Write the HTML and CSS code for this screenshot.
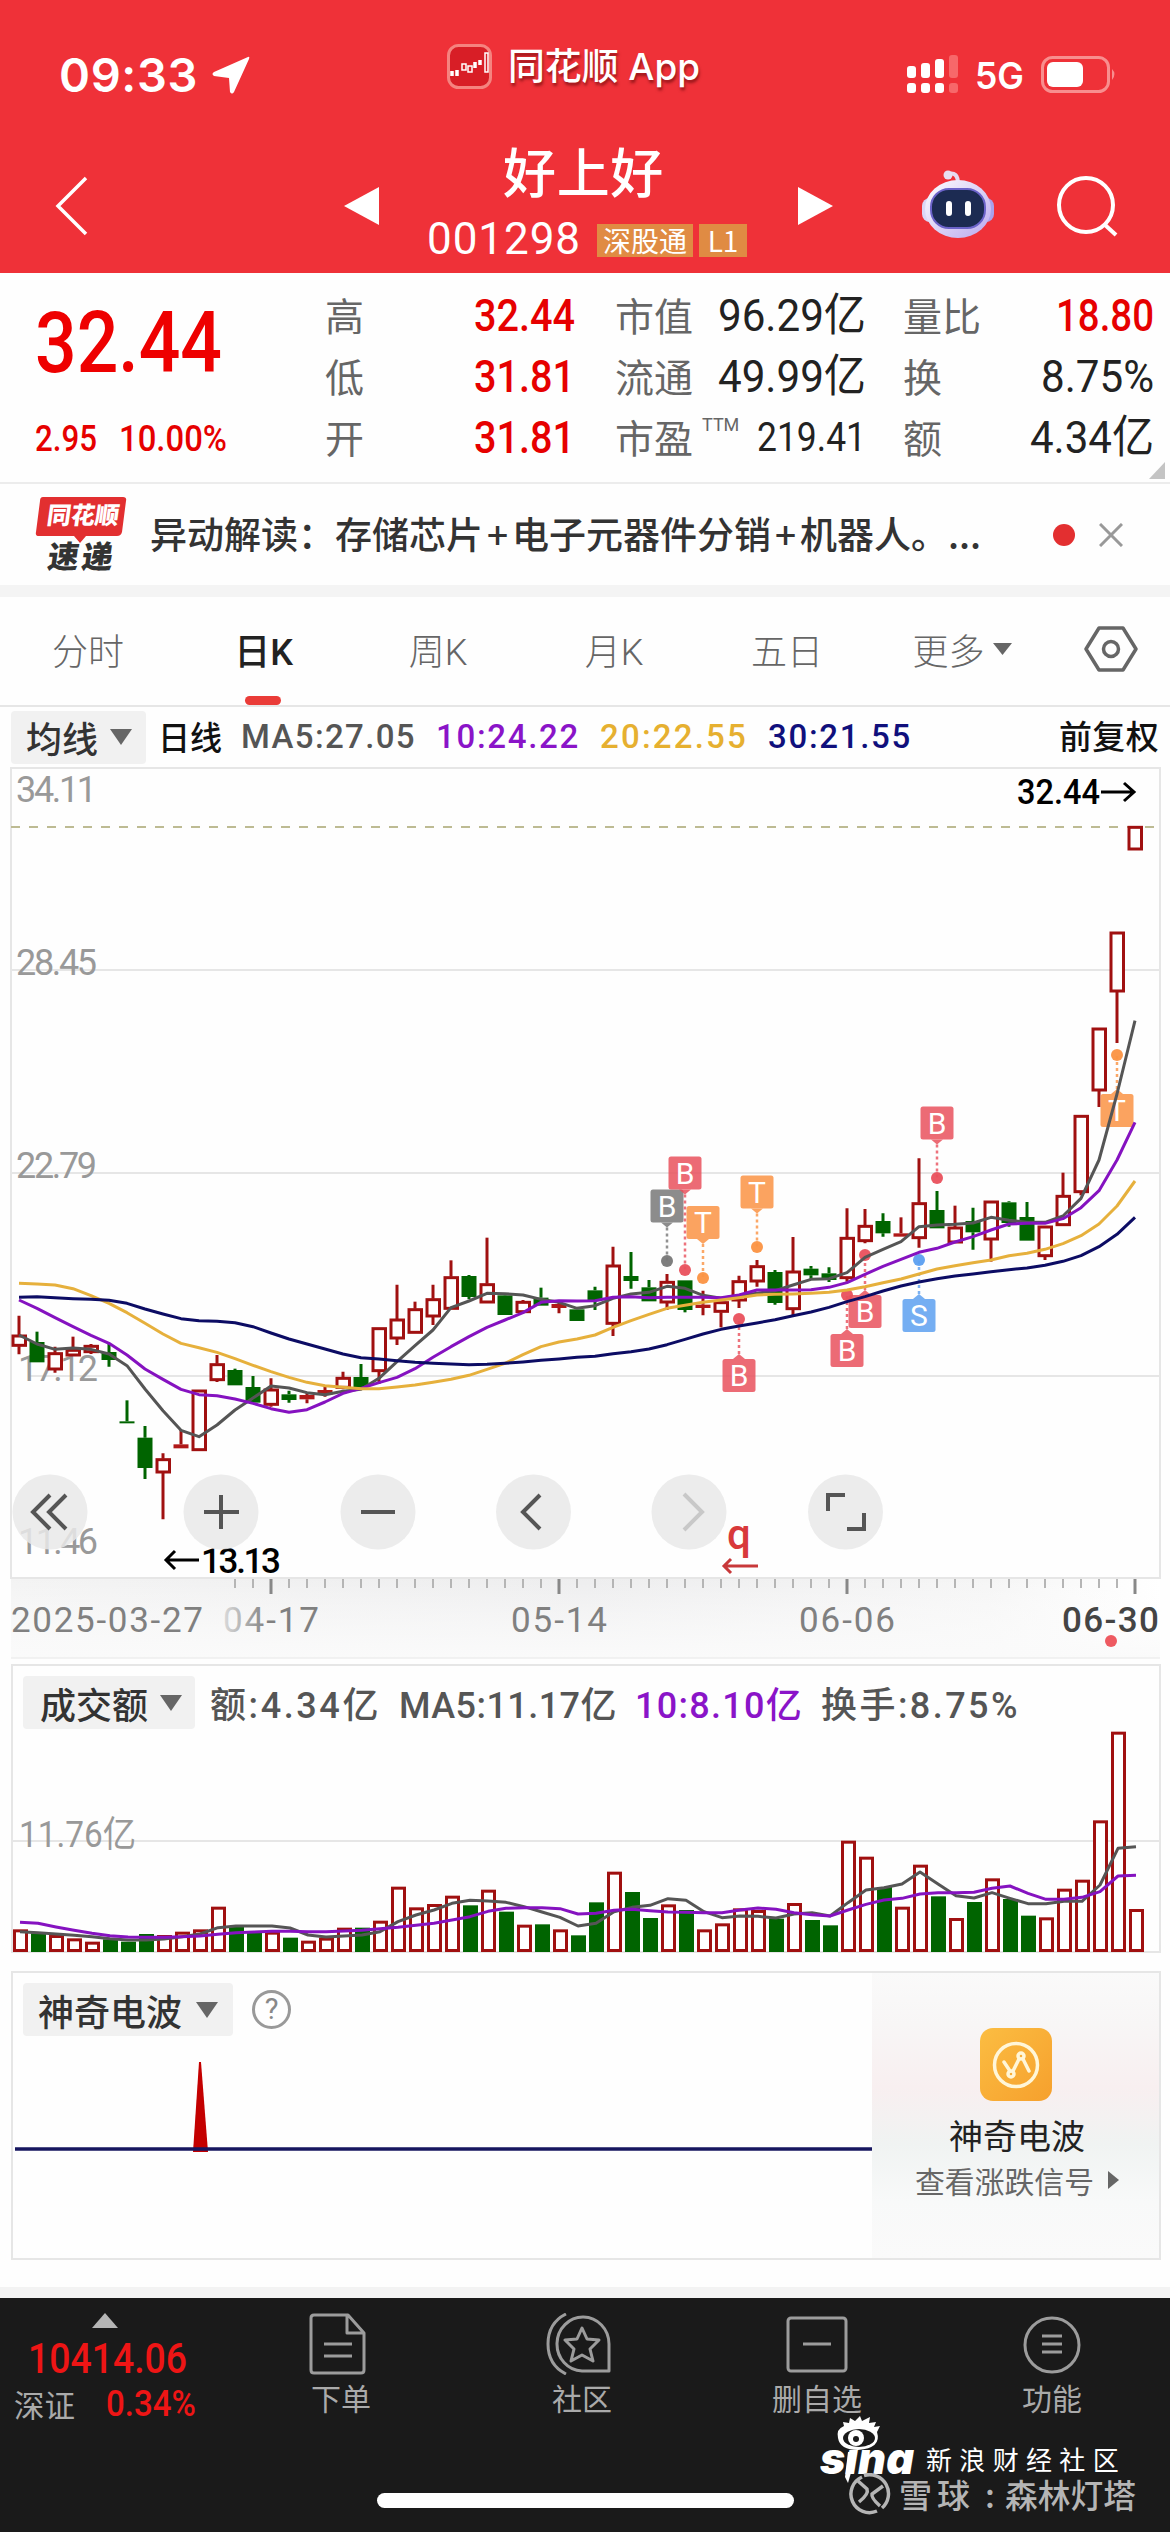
FILE: index.html
```html
<!DOCTYPE html>
<html lang="zh-CN">
<head>
<meta charset="utf-8">
<title>好上好 001298</title>
<link rel="stylesheet" href="styles.css">
</head>
<body>
<header class="top">
  <div class="status">
    <div class="clock"><span class="fit" data-w="139">09:33</span>
      <svg width="40" height="40" viewBox="0 0 40 40"><path d="M37 2 3 17q-3 2 0 4l15 2 1 14q2 3 4 0L38 4q1-3-1-2z" fill="#fff"/></svg>
    </div>
    <div class="island">
      <svg width="46" height="46" viewBox="0 0 46 46"><rect x="1.500" y="1.500" width="42" height="42" rx="10" fill="#d81e26" stroke="#f5837f" stroke-width="3"/><path d="M5 27v5M10 26v6M28 18v6M33 16v5" stroke="#fff" stroke-width="3.500"/><path d="M15 20h4v6h-4zM21 22h4v6h-4zM38 9h3v19h-3z" stroke="#fff" stroke-width="1.500" fill="none"/></svg>
      <span class="fit" data-w="192">同花顺 App</span>
    </div>
    <div class="signal">
      <svg width="54" height="40" viewBox="0 0 54 40"><g fill="#fff"><rect y="11" width="9" height="12" rx="3"/><rect x="14" y="8" width="9" height="15" rx="3"/><rect x="28" y="4" width="9" height="19" rx="3"/><rect y="28" width="9" height="10" rx="3"/><rect x="14" y="28" width="9" height="10" rx="3"/><rect x="28" y="28" width="9" height="10" rx="3"/></g><g fill="#f7686a"><rect x="42" width="9" height="23" rx="3"/><rect x="42" y="28" width="9" height="10" rx="3"/></g></svg>
      <span class="fit net" data-w="49">5G</span>
      <svg width="77" height="38" viewBox="0 0 77 38"><rect x="1.500" y="1.500" width="66" height="34" rx="10" fill="none" stroke="#f88e8e" stroke-width="3"/><rect x="6" y="6" width="36" height="25" rx="6" fill="#fff"/><path d="M71 13q5 5 0 11z" fill="#f88e8e"/></svg>
    </div>
  </div>
  <div class="titlebar">
    <svg class="back" width="34" height="62" viewBox="0 0 34 62"><path d="M31 3 3 31 31 59" fill="none" stroke="#fff" stroke-width="3.500"/></svg>
    <svg class="prev" width="36" height="38" viewBox="0 0 36 38"><path d="M35 0v38L0 19z" fill="#fff"/></svg>
    <div class="name">
      <h1><span class="fit" data-w="161">好上好</span></h1>
      <div class="code"><span class="fit" data-w="154">001298</span><i class="t1">深股通</i><i class="t2">L1</i></div>
    </div>
    <svg class="next" width="36" height="38" viewBox="0 0 36 38"><path d="M0 0v38L35 19z" fill="#fff"/></svg>
    <svg class="bot" width="76" height="70" viewBox="0 0 76 70"><defs><linearGradient id="bg" x1="0" y1="0" x2="1" y2="1"><stop offset="0" stop-color="#fff"/><stop offset="1" stop-color="#b9a8ee"/></linearGradient></defs><path d="M28 5q10-3 10 10" fill="none" stroke="#e6d9f0" stroke-width="4"/><circle cx="28" cy="6" r="4.500" fill="#e8dff2"/><rect x="2" y="29" width="16" height="24" rx="8" fill="#dad6f6"/><rect x="58" y="29" width="16" height="24" rx="8" fill="#a9a2ec"/><ellipse cx="38" cy="40" rx="33" ry="29" fill="url(#bg)"/><rect x="11" y="20" width="54" height="39" rx="18" fill="#1c2b52" stroke="#6b63c9" stroke-width="2"/><path d="M29 35v9M48 35v9" stroke="#fff" stroke-width="6" stroke-linecap="round"/></svg>
    <svg class="find" width="64" height="62" viewBox="0 0 64 62"><circle cx="30" cy="30" r="27" fill="none" stroke="#fff" stroke-width="4"/><path d="M48 49 60 60" stroke="#fff" stroke-width="4"/></svg>
  </div>
</header>

<section class="quote">
  <div class="price">
    <div class="big red"><span class="fit" data-w="187">32.44</span></div>
    <div class="chg red"><span class="fit" data-w="62">2.95</span><span class="fit" data-w="108">10.00%</span></div>
  </div>
  <dl class="c1">
    <dt>高</dt><dd class="red"><span class="fit" data-w="101">32.44</span></dd>
    <dt>低</dt><dd class="red"><span class="fit" data-w="101">31.81</span></dd>
    <dt>开</dt><dd class="red"><span class="fit" data-w="101">31.81</span></dd>
  </dl>
  <dl class="c2">
    <dt>市值</dt><dd><span class="fit" data-w="148">96.29亿</span></dd>
    <dt>流通</dt><dd><span class="fit" data-w="148">49.99亿</span></dd>
    <dt class="pe">市盈<sup>TTM</sup></dt><dd class="sm"><span class="fit" data-w="109">219.41</span></dd>
  </dl>
  <dl class="c3">
    <dt>量比</dt><dd class="red"><span class="fit" data-w="98">18.80</span></dd>
    <dt>换</dt><dd><span class="fit" data-w="113">8.75%</span></dd>
    <dt>额</dt><dd><span class="fit" data-w="124">4.34亿</span></dd>
  </dl>
  <svg class="corner" width="16" height="17" viewBox="0 0 16 17"><path d="M16 0v17H0z" fill="#c4c4c4"/></svg>
</section>

<section class="news">
  <div class="logo">
    <svg width="92" height="52" viewBox="0 0 92 52"><path d="M8 1h80q4 0 3 4l-4 31q-1 4-5 4H51l-6 7-6-7H4q-4 0-3-4L5 5q0-4 3-4z" fill="#e22f30"/></svg>
    <b class="l1">同花顺</b><b class="l2">速递</b>
  </div>
  <p><span class="fit" data-w="831">异动解读：存储芯片<i>+</i>电子元器件分销<i>+</i>机器人。...</span></p>
  <i class="dot"></i>
  <svg width="24" height="24" viewBox="0 0 24 24"><path d="M1 1 23 23M23 1 1 23" stroke="#999" stroke-width="3"/></svg>
</section>

<nav class="tabs">
  <a>分时</a><a class="on">日K</a><a>周K</a><a>月K</a><a>五日</a>
  <a class="more">更多<svg width="19" height="14" viewBox="0 0 19 14"><path d="M0 1h19L9.500 13z" fill="#666"/></svg></a>
  <a><svg width="54" height="48" viewBox="0 0 54 48"><path d="M15 3h24L52 24 39 45H15L2 24z" fill="none" stroke="#666" stroke-width="3.500" stroke-linejoin="round"/><circle cx="27" cy="24" r="7.500" fill="none" stroke="#666" stroke-width="3.500"/></svg></a>
</nav>

<section class="indicators">
  <span class="pill p1">均线<svg width="22" height="16" viewBox="0 0 22 16"><path d="M0 0h22L11 16z" fill="#666"/></svg></span>
  <span class="fit day" data-w="64">日线</span>
  <span class="fit m5" data-w="175">MA5:27.05</span>
  <span class="fit m10" data-w="144">10:24.22</span>
  <span class="fit m20" data-w="148">20:22.55</span>
  <span class="fit m30" data-w="144">30:21.55</span>
  <span class="fit adj" data-w="100">前复权</span>
</section>

<main>
  <svg id="kline" width="1170" height="897" viewBox="0 767 1170 897">
    <defs>
      <linearGradient id="ax"><stop offset="0" stop-color="#f3f3f3"/><stop offset=".5" stop-color="#ededee"/><stop offset=".85" stop-color="#f5f5f5"/><stop offset="1" stop-color="#fff"/></linearGradient>
      <linearGradient id="axv" x2="0" y2="1"><stop offset="0" stop-color="#fff" stop-opacity="0"/><stop offset="1" stop-color="#fafafa"/></linearGradient>
      <linearGradient id="fade" gradientUnits="userSpaceOnUse" x1="222" x2="268" y1="0" y2="0"><stop offset="0" stop-color="#ddd"/><stop offset="1" stop-color="#808080"/></linearGradient>
    </defs>
    <rect x="11" y="1578" width="1149" height="80" fill="url(#ax)"/><rect x="11" y="1578" width="1149" height="80" fill="url(#axv)"/>
    <path d="M11 768H1160V1578H11zM11 970H1160M11 1173H1160M30 1376H1160" fill="none" stroke="#e6e6e6" stroke-width="2"/>
    <path d="M11 1658H1160" stroke="#eee" stroke-width="1.500"/>
    <path d="M11 827H1160" stroke="#bdbb93" stroke-width="2" stroke-dasharray="9 9"/>
    <g class="scale">
      <text x="16" y="802" textLength="81">34.11</text><text x="16" y="975" textLength="81">28.45</text><text x="16" y="1178" textLength="81">22.79</text><text x="18" y="1381" textLength="80">17.12</text><text x="18" y="1554" textLength="80">11.46</text>
    </g>
    <g id="plot"></g>
    <g class="mark">
      <text x="1017" y="804" textLength="83" lengthAdjust="spacingAndGlyphs">32.44</text><text x="201" y="1573" textLength="80">13.13</text>
      <path d="M1101 792H1134M1124 783l10 9-10 9M199 1560H166M175 1551l-9 9 9 9"/>
    </g>
    <g class="ctl">
      <circle cx="50" cy="1512" r="37.500"/><circle cx="221" cy="1512" r="37.500"/><circle cx="378" cy="1512" r="37.500"/><circle cx="533.500" cy="1512" r="37.500"/><circle cx="689" cy="1512" r="37.500"/><circle cx="845.500" cy="1512" r="37.500"/>
      <path d="M50 1495 33 1512 50 1529M66 1495 49 1512 66 1529M204 1512h35M221 1495v34M361 1512h34M540 1495 523 1512 540 1529M828 1511v-16h17M864 1513v16h-17"/>
      <path d="M684 1494 702 1512 684 1530" stroke="#c8c8c8"/>
    </g>
    <text x="727" y="1549" class="q">q</text><path d="M758 1566H724M731 1559l-7 7 7 7" fill="none" stroke="#c8383a" stroke-width="3"/>
    <g id="ticks"></g>
    <g class="dates">
      <text x="11" y="1632" textLength="192">2025-03-27</text><text x="223" y="1632" textLength="96" fill="url(#fade)">04-17</text><text x="511" y="1632" textLength="96">05-14</text><text x="799" y="1632" textLength="96">06-06</text><text x="1062" y="1632" textLength="97" class="now">06-30</text>
    </g>
    <circle cx="1111" cy="1641" r="6" fill="#ee5a61"/>
  </svg>

  <section class="panel volume">
    <div class="head">
      <span class="pill p2">成交额<svg width="22" height="16" viewBox="0 0 22 16"><path d="M0 0h22L11 16z" fill="#666"/></svg></span>
      <span class="fit" data-w="171">额:4.34亿</span><span class="fit" data-w="218">MA5:11.17亿</span><span class="fit m10" data-w="168">10:8.10亿</span><span class="fit" data-w="199">换手:8.75%</span>
    </div>
    <svg id="vol" width="1147" height="223" viewBox="12 1730 1147 223"></svg>
  </section>

  <section class="panel wave">
    <div class="left">
      <div class="head">
        <span class="pill p3">神奇电波<svg width="22" height="16" viewBox="0 0 22 16"><path d="M0 0h22L11 16z" fill="#666"/></svg></span>
        <span class="help">?</span>
      </div>
      <svg width="859" height="100" viewBox="12 2058 859 100"><path d="M198 2062h2l7 90h-15z" fill="#c40000"/><path d="M14 2149H871" stroke="#16165f" stroke-width="3.500"/></svg>
    </div>
    <aside>
      <svg width="72" height="73" viewBox="0 0 72 73"><defs><linearGradient id="or" x2="1" y2="1"><stop offset="0" stop-color="#fbbd42"/><stop offset="1" stop-color="#f6a02d"/></linearGradient></defs><rect width="72" height="73" rx="13" fill="url(#or)"/><g fill="none" stroke="#fff6d8" stroke-width="3.500"><circle cx="36" cy="37" r="21.500"/><path d="M24 34 30 43M33 43 39 31M43 31 49 43" stroke-linecap="round"/><circle cx="31" cy="46" r="3"/><circle cx="41" cy="28" r="3"/></g></svg>
      <strong><span class="fit" data-w="136">神奇电波</span></strong>
      <small><span class="fit" data-w="179">查看涨跌信号</span><svg width="11" height="18" viewBox="0 0 11 18"><path d="M0 0 11 9 0 18z" fill="#666"/></svg></small>
    </aside>
  </section>
</main>

<footer>
  <div class="index">
    <svg width="28" height="16" viewBox="0 0 28 16"><path d="M14 0 27 15H1z" fill="#b5b5b5"/></svg>
    <b><span class="fit" data-w="159">10414.06</span></b>
    <p><span class="fit" data-w="61">深证</span><em><span class="fit" data-w="90">0.34%</span></em></p>
  </div>
  <a><svg width="58" height="62" viewBox="0 0 58 62"><path d="M5 2H39L55 20V57q0 3-3 3H5q-3 0-3-3V5q0-3 3-3zM38 3V20H54M15 31H43M15 43H43"/></svg><span class="lab">下单</span></a>
  <a><svg width="66" height="62" viewBox="0 0 66 62"><path d="M20 1Q2 10 2 31T20 61M63 58H36A26 27 0 1 1 63 31zM36 15l5 11 12 1-9 9 3 12-11-6-11 6 3-12-9-9 12-1z"/></svg><span class="lab">社区</span></a>
  <a><svg width="62" height="62" viewBox="0 0 62 62"><rect x="2" y="5" width="58" height="53" rx="3"/><path d="M17 31H45"/></svg>删自选</a>
  <a><svg width="62" height="62" viewBox="0 0 62 62"><circle cx="31" cy="32" r="27"/><path d="M21 23H41M21 31H41M21 39H41"/></svg>功能</a>
  <div class="home"></div>
  <div class="credit">
    <div class="sina">
      <svg width="46" height="68" viewBox="0 0 46 68"><path d="M2 22Q0 13 8 10l-1-4 6 1 1-5 5 3L24 0l2 5 8-4-1 6 7-1-2 5 6-1-3 6Q46 32 22 34 4 34 2 22z" fill="#fff"/><ellipse cx="23" cy="22" rx="16" ry="9" fill="#1a1a1a"/><circle cx="20" cy="22" r="8" fill="#fff"/><circle cx="20" cy="23" r="3" fill="#1a1a1a"/><path d="M12 36h9l-9 31-3-6z" fill="#fff"/></svg>
      <b><span class="fit" data-w="94">sına</span></b>
    </div>
    <span class="sinatext"><span class="fit" data-w="200">新浪财经社区</span></span>
    <div class="snow"><svg width="42" height="42" viewBox="0 0 42 42"><g fill="none" stroke="#b5b5b5" stroke-width="3.500"><path d="M13 4A18.500 18.500 0 1 0 28 38M15 2.500A19 19 0 0 1 33 35"/><path d="M9 8 18 16Q20 21 10 29M34 13 23 21Q22 25 31 33"/></g></svg><span class="fit" data-w="76">雪球</span><span>:</span><span class="fit" data-w="131">森林灯塔</span></div>
  </div>
</footer>
<script src="chart.js"></script>
</body>
</html>
```
FILE: styles.css
```css
* { box-sizing: border-box; margin: 0; padding: 0; }
body {
  width: 1170px; height: 2532px; overflow: hidden; background: #fefefe; color: #333;
  font-family: Roboto, "Noto Sans CJK SC", sans-serif; position: relative;
}
svg { display: block; flex: none; }
i, em { font-style: normal; }
.fit { display: inline-block; white-space: nowrap; transform-origin: 0 50%; flex: none; }
.red { color: #e60000; }

.top { height: 273px; background: #ef3138; color: #fff; }
.status { height: 130px; display: grid; grid-template-columns: 447px 460px 263px; }
.clock { display: flex; align-items: center; gap: 13px; padding: 18px 0 0 59px; font: 600 47px Inter, sans-serif; }
.clock svg { margin-top: 2px; }
.island { display: flex; align-items: center; gap: 15px; padding-top: 4px; font: 500 37px/50px Inter, "Noto Sans CJK SC", sans-serif; text-shadow: 1px 3px 3px rgba(80,0,0,.55); }
.island .fit { margin-top: -1px; }
.signal { display: flex; align-items: center; padding-top: 20px; }
.net { font: 600 37px Inter, sans-serif; margin: 0 17px 0 14px; }
.titlebar { height: 143px; display: grid; grid-template-columns: 56px 287px 62px 392px 123px 136px 114px; align-items: center; }
.titlebar > svg { margin-top: 9px; }
.titlebar .back { grid-column: 2; margin-left: -1px; }
.titlebar .prev { grid-column: 3; margin-left: 1px; }
.name { grid-column: 4; grid-row: 1; height: 143px; padding: 9px 0 0 22px; }
.titlebar .prev, .titlebar .next, .titlebar .bot, .titlebar .find, .titlebar .back { grid-row: 1; }
.titlebar .next { grid-column: 5; margin-left: 1px; }
.titlebar .bot { grid-column: 6; margin-top: 5px; }
.titlebar .find { grid-column: 7; }
h1 { font: 500 53px/62px "Noto Sans CJK SC", sans-serif; padding-left: 76px; }
.code { display: flex; align-items: center; height: 76px; font-size: 44px; }
.code i { height: 33px; background: #e08b43; font: 400 28px/32px "Noto Sans CJK SC", sans-serif; text-align: center; }
.t1 { width: 96px; margin: 2px 6px 0 16px; }
.t2 { width: 48px; margin-top: 2px; }

.quote { height: 211px; display: grid; grid-template-columns: 325px 290px 288px 267px; position: relative; border-bottom: 2px solid #ececec; }
.price { padding: 14px 0 0 35px; }
.big { font: 500 85px/112px Roboto, sans-serif; color: #ee0000; }
.chg { display: flex; gap: 22px; font: 500 36px/80px Roboto, sans-serif; }
dl { display: grid; grid-template-columns: auto auto; grid-auto-rows: 61px; justify-content: space-between; padding-top: 13px; line-height: 60px; }
dt { font-size: 39px; color: #666; line-height: 65px; white-space: nowrap; }
dd { font-size: 45px; font-weight: 500; text-align: right; white-space: nowrap; }
dd:not(.red) { font-weight: 400; color: #222; }
dd.sm { font-size: 40px; }
.c1 { width: 250px; } .c2 { width: 251px; } .c3 { width: 251px; }
.pe { position: relative; }
sup { position: absolute; left: 87px; top: -16px; font-size: 18px; }
.corner { position: absolute; right: 5px; bottom: 3px; }

.news { height: 101px; display: flex; align-items: center; }
.logo { position: relative; width: 92px; height: 78px; margin: 0 23px 0 35px; }
.logo b { position: absolute; font-weight: 900; transform: skewX(-8deg); white-space: nowrap; }
.l1 { left: 12px; top: 4px; font-size: 24px; line-height: 32px; color: #fff; }
.l2 { left: 13px; top: 44px; font-size: 31px; line-height: 36px; letter-spacing: 3px; }
.news p { width: 903px; font: 500 37px/50px "Noto Sans CJK SC", sans-serif; margin-top: -3px; }
.news p i { margin: 0 4px; }
.dot { width: 22px; height: 22px; border-radius: 50%; background: #e32f30; margin-right: 24px; }

.tabs { height: 122px; border-top: 12px solid #f4f4f4; border-bottom: 2px solid #e6e6e6; display: grid; grid-template-columns: 176px 175px 174px 178px 168px 176px 123px; }
.tabs a { display: flex; align-items: center; justify-content: center; position: relative; font-size: 36px; color: #666; padding-bottom: 5px; gap: 8px; font-weight: 300; }
.tabs .on { color: #222; font-weight: 500; }
.tabs .more { padding-left: 6px; }
.tabs a:last-child { padding: 0 0 4px 5px; }
.on::after { content: ""; position: absolute; width: 36px; height: 9px; border-radius: 5px; background: #ea3c38; bottom: 0; left: 69px; }

.indicators { height: 60px; display: flex; align-items: center; font-size: 33px; color: #555; padding-left: 11px; }
.pill { height: 53px; background: #f1f1f1; border-radius: 4px; display: flex; align-items: center; gap: 12px; font: 500 36px/50px "Noto Sans CJK SC", sans-serif; color: #333; flex: none; white-space: nowrap; }
.p1 { width: 135px; padding-left: 15px; margin-right: 12px; }
.day { color: #111; font-weight: 500; margin-right: 19px; }
.m5, .m10, .m20 { margin-right: 20px; }
.indicators .fit { font-weight: 500; margin-top: -2px; }
.m10 { color: #8a14c8; } .m20 { color: #e6b030; } .m30 { color: #10107c; }
.indicators .adj { margin-left: auto; margin-right: 11px; margin-top: -5px; color: #111; font-weight: 500; }

#kline text { font-size: 35px; }
#kline .scale text { fill: #999; font-size: 36px; }
.mark text { font-weight: 500; fill: #000; }
.mark path { fill: none; stroke: #000; stroke-width: 3; }
.ctl circle { fill: #e9e9e9; fill-opacity: .85; }
.ctl path { fill: none; stroke: #555; stroke-width: 4; }
.ctl path[stroke] { stroke: #c8c8c8; }
#kline .q { font-size: 42px; font-weight: 500; fill: #d8393b; }
.dates text { fill: #808080; }
.dates text[fill] { fill: url(#fade); }
#kline .now { fill: #444; font-weight: 500; }
#kline .tag { font-size: 30px; fill: #fff; text-anchor: middle; }

.panel { width: 1150px; margin-left: 11px; border: 2px solid #e6e6e6; }
.volume { height: 289px; padding-top: 9px; }
.head { display: flex; align-items: center; height: 55px; padding-left: 10px; font-size: 36px; color: #555; }
.volume .head .fit { font-weight: 500; margin-right: 18px; margin-top: -2px; }
.volume .head .m10 { color: #8a14c8; }
.p2 { width: 172px; padding-left: 17px; margin-right: 15px; }
.p3 { width: 210px; padding-left: 15px; gap: 14px; }
#vol text { font-size: 36px; fill: #999; }
.wave { height: 289px; margin-top: 18px; display: flex; }
.left { width: 859px; padding-top: 9px; }
.left .head { margin-bottom: 21px; }
.help { width: 39px; height: 39px; border: 3px solid #999; border-radius: 50%; margin-left: 19px; color: #888; font-size: 29px; line-height: 33px; text-align: center; }
aside { width: 287px; background: linear-gradient(#fafafa 0, #f8f6f6 18%, #f8eff0 40%, #f0f3f2 60%, #f8f9f9 80%, #fafafa); display: flex; flex-direction: column; align-items: flex-start; padding: 55px 0 0 30px; }
aside > svg { margin-left: 78px; }
aside strong { margin: 9px 0 0 47px; font: 400 34px/50px "Noto Sans CJK SC", sans-serif; color: #222; }
small { display: flex; align-items: center; gap: 14px; margin: -2px 0 0 13px; font: 400 30px/44px "Noto Sans CJK SC", sans-serif; color: #666; }

footer { position: absolute; left: 0; top: 2287px; width: 1170px; height: 245px; border-top: 11px solid #f3f3f3; background: #1a1a1a; display: grid; grid-template-columns: 218px 240px 242px 234px 236px; color: #aaa; }
.index { padding-top: 15px; }
.index > svg { margin-left: 91px; }
.index b { display: block; margin: 4px 0 0 28px; font: 500 43px/50px Roboto, sans-serif; color: #ee1515; }
.index p { display: flex; align-items: center; padding-left: 14px; margin-top: -2px; font: 400 31px/46px "Noto Sans CJK SC", sans-serif; }
.index em { margin-left: 31px; font: 500 36px/46px Roboto, sans-serif; color: #ee1515; }
footer > a { display: flex; flex-direction: column; align-items: center; padding-top: 15px; font-size: 30px; line-height: 44px; gap: 3px; }
footer > a svg { fill: none; stroke: #9c9c9c; stroke-width: 3; stroke-linejoin: round; }
.lab { padding-left: 6px; }
.home { position: absolute; left: 377px; bottom: 24px; width: 417px; height: 15px; border-radius: 8px; background: #fff; }
.credit { position: absolute; left: 820px; top: 118px; width: 320px; height: 105px; color: #fff; }
.sina svg { margin-left: 16px; }
.sina b { position: absolute; left: 0; top: 25px; font: italic 900 44px/34px Inter, sans-serif; }
.sinatext { position: absolute; left: 106px; top: 29px; font: 400 26px/28px "Noto Sans CJK SC", sans-serif; }
.snow { position: absolute; left: 29px; top: 57px; display: flex; align-items: center; font: 500 33px/32px "Noto Sans CJK SC", sans-serif; color: #b5b5b5; }
.snow span { margin-left: 8px; }
.snow span:nth-child(3) { margin: 0 0 0 10px; width: 12px; }
```
FILE: chart.js
```js
// Condense or track each figure to the column width in data-w.
document.querySelectorAll('.fit').forEach(function (el) {
  var target = +el.dataset.w, natural = el.getBoundingClientRect().width;
  if (natural > target) {
    el.style.transform = 'scaleX(' + target / natural + ')';
  } else {
    el.style.letterSpacing = (target - natural) / el.textContent.length + 'px';
  }
  el.style.width = target + 'px';
});

var X0 = 19, STEP = 18, RED = '#a01010', GREEN = '#006400';
var x = function (i) { return X0 + STEP * i; };

// colour, high, body top, body bottom, low (thirds of a pixel below the base)
var early = { base: 1220, rows: [
 'r',287,345,379,403,'g',335,366,427,427,'r',380,398,450,458,'r',350,388,408,408,'r',372,376,398,402,'g',372,396,420,440,
 'g',541,604,610,610,'g',618,653,744,777,'r',700,716,759,898,'r',630,673,685,685,'r',510,510,692,692,'r',405,431,482,486,
 'g',446,450,496,496,'g',468,501,548,548,'r',475,507,556,560,'g',512,523,540,548,'r',518,525,538,550,'r',500,510,524,530,
 'r',455,472,505,508,'g',432,471,502,502,'r',323,323,455,492,'r',194,297,357,375,'r',245,266,340,340,'r',194,236,291,315,
 'r',121,170,268,268,'g',165,168,231,238,'r',53,191,249,249,'g',222,226,285,285,'r',240,244,278,278,'g',203,233,257,257,
 'r',240,252,264,280,'g',268,268,303,303] };
var late = { base: 1080, rows: [
 'g',620,631,660,690,'r',500,555,733,768,'g',516,588,603,626,'g',600,622,664,664,'r',582,604,669,690,'g',601,601,690,697,
 'r',632,674,684,706,'r',665,665,697,742,'r',587,602,663,684,'r',540,557,606,620,'g',570,576,669,674,'r',471,573,689,706,
 'g',558,566,586,600,'g',562,580,600,606,'r',385,472,596,605,'r',387,436,485,490,'g',400,423,460,470,'r',412,460,470,470,
 'r',235,368,476,503,'g',333,390,445,445,'r',377,441,489,489,'g',383,423,457,509,'r',363,363,480,545,'g',364,367,429,440,
 'g',366,411,482,482,'r',438,438,530,540,'r',278,346,437,437,'r',106,106,338,346,'r',-156,-156,33,81,'r',-444,-444,-264,-111,
 'r',-761,-761,-690,-690] };

var out = '', n = 0;
[early, late].forEach(function (part) {
  for (var k = 0; k < part.rows.length; k += 5, n++) {
    var v = part.rows.slice(k + 1, k + 5).map(function (t) { return part.base + t / 3; });
    var c = part.rows[k] === 'r' ? RED : GREEN, h = v[2] - v[1];
    out += '<path d="M' + x(n) + ' ' + v[0] + 'V' + v[1] + 'M' + x(n) + ' ' + v[2] + 'V' + v[3] + '" stroke="' + c + '" stroke-width="3"/>';
    if (c === RED && h > 6) {
      out += '<rect x="' + (x(n) - 6) + '" y="' + (v[1] + 1) + '" width="12.500" height="' + (h - 2) + '" fill="#fff" stroke="' + RED + '" stroke-width="3"/>';
    } else {
      out += '<rect x="' + (x(n) - 7.5) + '" y="' + v[1] + '" width="15" height="' + h + '" fill="' + (c === RED ? '#b01818' : c) + '"/>';
    }
  }
});

function line(ys, color) {
  return '<polyline fill="none" stroke-width="3" stroke-linejoin="round" stroke="' + color + '" points="' +
    ys.map(function (y, i) { return x(i) + ',' + y; }).join(' ') + '"/>';
}
function join(a, b) {
  return a.map(function (t) { return 1220 + t / 3; }).concat(b.map(function (t) { return 1080 + t / 3; }));
}

// buy / sell / trade signals: candle, box top, dot centre, letter, colour
var signals = [[36,1189.5,1261,'B','#777'],[37,1156.5,1270,'B','#e9505c'],[38,1206,1278,'T','#fb9242'],[41,1175.5,1247,'T','#fb9242'],
 [51,1106.5,1178,'B','#e9505c'],[40,1359,1319,'B','#e9505c'],[46,1334,1295,'B','#e9505c'],[47,1295,1255,'B','#e9505c'],
 [50,1299,1260,'S','#5b9ff0'],[61,1094,1055,'T','#fb9242']];
signals.forEach(function (s) {
  var cx = x(s[0]), top = s[1], up = s[2] > top, edge = up ? top + 33 : top, d = up ? 5 : -5;
  out += '<path d="M' + cx + ' ' + (edge + d) + 'V' + s[2] + '" stroke="' + s[4] + '" stroke-width="2.500" stroke-dasharray="3 3" opacity=".8"/>' +
    '<circle cx="' + cx + '" cy="' + s[2] + '" r="6" fill="' + s[4] + '" opacity=".95"/>' +
    '<g opacity=".84"><rect x="' + (cx - 16.5) + '" y="' + top + '" width="33" height="33" rx="2.500" fill="' + s[4] + '"/>' +
    '<path d="M' + (cx - 6) + ' ' + edge + 'h12l-6 ' + d + 'z" fill="' + s[4] + '"/></g>' +
    '<text class="tag" x="' + cx + '" y="' + (top + 27) + '">' + s[3] + '</text>';
});

out += line(join([345,372,388,384,388,402,437,507,572,631,650,615,570,534,498,504,518,524,514,508,475,425,377,330,263,243,220,221,225,238,247,265],
  [677,655,642,637,619,625,646,655,647,640,632,615,598,596,578,532,508,485,440,435,433,429,412,421,427,427,408,355,240,42,-178]), '#555');
out += line(join([240,265,293,320,346,370,405,447,478,508,524,527,537,550,566,577,569,546,520,505,488,472,446,412,380,350,322,300,278,247,242,243],
  [662,652,650,653,652,652,652,653,645,630,630,630,629,622,608,583,559,538,517,505,486,470,450,432,430,430,416,383,332,240,127]), '#8512c0');
out += line(join([190,192,195,206,227,250,278,310,342,370,383,397,416,436,455,472,487,497,502,506,506,501,495,487,478,466,448,430,404,380,366,357],
  [765,742,722,703,685,676,667,660,653,645,643,642,640,637,630,620,608,597,582,567,557,548,540,527,520,508,491,467,432,378,303]), '#e6b03c');
out += line(join([232,230,233,236,238,241,250,267,282,296,302,304,308,320,339,357,372,387,402,413,417,422,427,430,432,434,433,430,426,421,417,412],
  [829,821,815,807,794,778,762,748,738,729,719,707,696,682,665,650,633,618,606,596,588,582,575,569,564,556,544,527,500,463,412]), '#0c0c64');
document.getElementById('plot').innerHTML = out;

var ticks = '';
for (var i = 12; i < 63; i++) {
  var major = (i - 14) % 16 === 0;
  ticks += '<path d="M' + x(i) + ' 1579V' + (major ? 1594 : 1588) + '" stroke="' + (major ? '#888' : '#b5b5b5') + '" stroke-width="' + (major ? 3 : 2) + '"/>';
}
document.getElementById('ticks').innerHTML = ticks;

var kinds = 'rgrrrgggrrrrggrgrrrgrrrrrgrgrgrggrggrgrrrrgrggrrgrrgrgrggrrrrrr';
var tops = [808,820,825,835,845,838,845,822,825,815,808,740,800,818,815,833,842,833,803,803,782,680,742,732,707,736,689,755,794,793,808,826,727,635,696,774,733,750,808,790,745,750,776,729,780,796,542,590,681,740,614,709,774,726,655,717,767,772,686,659,481,215,747];
var toY = function (t) { return 1660 + t / 3; };
var vol = '<path d="M12 1841H1159" stroke="#e6e6e6" stroke-width="2"/><text x="18" y="1847" textLength="117" lengthAdjust="spacingAndGlyphs">11.76亿</text>';
tops.forEach(function (t, i) {
  var y = toY(t), h = 1952 - y;
  vol += kinds[i] === 'r'
    ? '<rect x="' + (x(i) - 5.5) + '" y="' + (y + 1.5) + '" width="12" height="' + (h - 3) + '" fill="#fff" stroke="' + RED + '" stroke-width="3"/>'
    : '<rect x="' + (x(i) - 7) + '" y="' + y + '" width="15" height="' + h + '" fill="' + GREEN + '"/>';
});
vol += line([815,818,822,826,830,836,840,840,837,830,822,803,798,798,798,804,825,831,828,825,815,785,765,750,730,721,723,727,740,756,772,798,790,755,742,736,716,721,755,773,768,769,774,762,758,768,728,690,683,672,636,672,707,714,698,715,731,731,724,724,675,565,560].map(toY), '#555');
vol += line([787,790,801,811,820,827,831,832,832,830,828,823,818,816,814,814,815,815,813,811,806,802,796,790,780,770,754,745,743,743,746,762,760,751,748,752,756,757,758,758,750,744,748,758,764,768,750,733,720,715,702,698,698,697,685,678,700,718,718,712,695,648,646].map(toY), '#8512c0');
document.getElementById('vol').innerHTML = vol;
```
